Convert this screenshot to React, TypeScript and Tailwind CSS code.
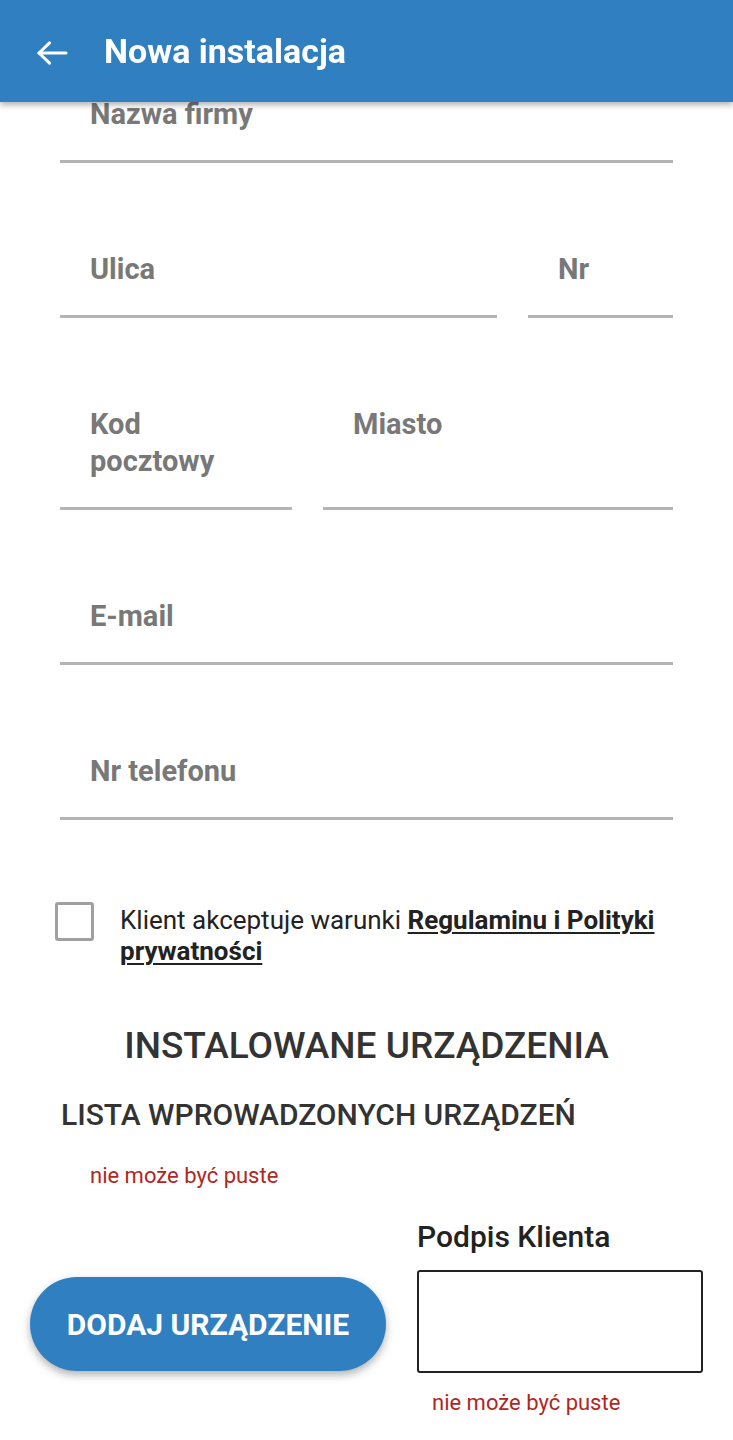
import type { ReactNode } from 'react';

const font = { fontFamily: 'Roboto, "Noto Sans", sans-serif' };

// Single underlined form field (label acts as placeholder)
function Field({ label, className = '' }: { label: ReactNode; className?: string }) {
  return (
    <div className={`border-b-[3px] border-[#b4b4b4] pb-[27px] pl-[30px] ${className}`}>
      <div className="text-[29px] leading-[37px] font-bold text-[#787878]">{label}</div>
    </div>
  );
}

function Err({ className = '' }: { className?: string }) {
  return <p className={`text-[22px] leading-[26px] text-[#b3261e] ${className}`}>nie może być puste</p>;
}

export default function App() {
  return (
    <div className="min-h-screen bg-white" style={font}>
      {/* Toolbar */}
      <header className="fixed top-0 left-0 right-0 z-10 h-[102px] bg-[#2f7fc1] flex items-center shadow-[0_3px_6px_rgba(0,0,0,0.3)]">
        <button className="ml-[37px] mt-[4px] text-white">
          <svg width="31" height="24" viewBox="0 0 31 24" fill="none" stroke="currentColor" strokeWidth="3" strokeLinecap="round" strokeLinejoin="round">
            <path d="M2 12h27" />
            <path d="M12.5 1.8 2 12l10.5 10.2" />
          </svg>
        </button>
        <h1 className="ml-[36px] text-[34px] font-bold text-white">Nowa instalacja</h1>
      </header>

      {/* Form */}
      <main className="pt-[96px] pb-[24px]">
        <div className="px-[60px] flex flex-col gap-[88px]">
          <Field label="Nazwa firmy" />
          <div className="flex gap-[31px]">
            <Field label="Ulica" className="flex-1" />
            <Field label="Nr" className="w-[145px]" />
          </div>
          <div className="flex gap-[31px]">
            <Field label={<>Kod<br />pocztowy</>} className="w-[232px] pb-[25px]" />
            <Field label="Miasto" className="flex-1" />
          </div>
          <Field label="E-mail" />
          <Field label="Nr telefonu" />
        </div>

        {/* Terms checkbox */}
        <div className="mt-[82px] pl-[55px] pr-[60px] flex items-start gap-[26px]">
          <div className="w-[39px] h-[39px] shrink-0 border-[3px] border-[#a0a0a0] rounded-[3px]" />
          <p className="mt-[3px] text-[26px] leading-[31px] text-[#222]">
            Klient akceptuje warunki{' '}
            <a className="font-bold underline decoration-2 underline-offset-[3px]">Regulaminu i Polityki prywatności</a>
          </p>
        </div>

        {/* Devices */}
        <h2 className="mt-[58px] text-center text-[37px] leading-[42px] font-medium text-[#333]">
          INSTALOWANE URZĄDZENIA
        </h2>
        <h3 className="mt-[32px] pl-[61px] text-[30px] leading-[32px] font-medium text-[#333]">
          LISTA WPROWADZONYCH URZĄDZEŃ
        </h3>
        <Err className="mt-[32px] pl-[90px]" />

        <div className="mt-[31px] px-[30px] flex gap-[31px]">
          <button className="mt-[57px] w-[356px] h-[94px] rounded-full bg-[#2f7fc1] text-white text-[30px] font-bold shadow-[0_4px_8px_rgba(0,0,0,0.3)]">
            DODAJ URZĄDZENIE
          </button>
          <div className="flex-1">
            <div className="text-[30px] leading-[34px] font-medium text-[#222]">Podpis Klienta</div>
            <div className="mt-[16px] h-[103px] border-2 border-[#222] rounded-[3px]" />
            <Err className="mt-[17px] pl-[15px]" />
          </div>
        </div>
      </main>
    </div>
  );
}
